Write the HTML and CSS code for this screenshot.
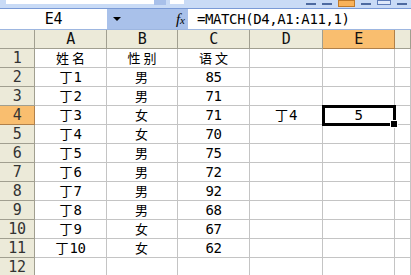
FILE: index.html
```html
<!DOCTYPE html>
<html lang="zh-CN">
<head>
  <meta charset="UTF-8" />
  <title>MATCH</title>
  <link rel="stylesheet" href="styles.css">
</head>
<body>
  <div class="toolbar">
    <div class="tb-box"></div>
    <div class="tb-btn"></div>
    <div class="tb-box short"></div>
    <div class="tb-icons">
      <span class="ico"></span>
      <span class="ico"></span>
      <span class="ico on"></span>
      <span class="ico"></span>
      <span class="ico wide"></span>
      <span class="ico"></span>
    </div>
  </div>

  <div class="formula-bar">
    <div class="name-box">E4</div>
    <div class="name-drop"><span class="arrow"></span></div>
    <div class="fx"><i>f</i><span>x</span></div>
    <div class="formula">=MATCH(D4,A1:A11,1)</div>
  </div>

  <div class="sheet">
    <div class="hd corner"></div>
    <div class="hd">A</div>
    <div class="hd">B</div>
    <div class="hd">C</div>
    <div class="hd">D</div>
    <div class="hd active">E</div>
    <div class="hd"></div>

    <div class="rh">1</div>
    <div class="c"><span class="cn two">姓名</span></div>
    <div class="c"><span class="cn two">性别</span></div>
    <div class="c"><span class="cn two">语文</span></div>
    <div class="c"></div><div class="c"></div><div class="c"></div>

    <div class="rh">2</div>
    <div class="c"><span class="cn">丁</span>1</div>
    <div class="c"><span class="cn">男</span></div>
    <div class="c">85</div>
    <div class="c"></div><div class="c"></div><div class="c"></div>

    <div class="rh">3</div>
    <div class="c"><span class="cn">丁</span>2</div>
    <div class="c"><span class="cn">男</span></div>
    <div class="c">71</div>
    <div class="c"></div><div class="c"></div><div class="c"></div>

    <div class="rh active">4</div>
    <div class="c"><span class="cn">丁</span>3</div>
    <div class="c"><span class="cn">女</span></div>
    <div class="c">71</div>
    <div class="c"><span class="cn">丁</span>4</div>
    <div class="c selected">5</div>
    <div class="c"></div>

    <div class="rh">5</div>
    <div class="c"><span class="cn">丁</span>4</div>
    <div class="c"><span class="cn">女</span></div>
    <div class="c">70</div>
    <div class="c"></div><div class="c"></div><div class="c"></div>

    <div class="rh">6</div>
    <div class="c"><span class="cn">丁</span>5</div>
    <div class="c"><span class="cn">男</span></div>
    <div class="c">75</div>
    <div class="c"></div><div class="c"></div><div class="c"></div>

    <div class="rh">7</div>
    <div class="c"><span class="cn">丁</span>6</div>
    <div class="c"><span class="cn">男</span></div>
    <div class="c">72</div>
    <div class="c"></div><div class="c"></div><div class="c"></div>

    <div class="rh">8</div>
    <div class="c"><span class="cn">丁</span>7</div>
    <div class="c"><span class="cn">男</span></div>
    <div class="c">92</div>
    <div class="c"></div><div class="c"></div><div class="c"></div>

    <div class="rh">9</div>
    <div class="c"><span class="cn">丁</span>8</div>
    <div class="c"><span class="cn">男</span></div>
    <div class="c">68</div>
    <div class="c"></div><div class="c"></div><div class="c"></div>

    <div class="rh">10</div>
    <div class="c"><span class="cn">丁</span>9</div>
    <div class="c"><span class="cn">女</span></div>
    <div class="c">67</div>
    <div class="c"></div><div class="c"></div><div class="c"></div>

    <div class="rh">11</div>
    <div class="c"><span class="cn">丁</span>10</div>
    <div class="c"><span class="cn">女</span></div>
    <div class="c">62</div>
    <div class="c"></div><div class="c"></div><div class="c"></div>

    <div class="rh">12</div>
    <div class="c"></div><div class="c"></div><div class="c"></div>
    <div class="c"></div><div class="c"></div><div class="c"></div>
  </div>
</body>
</html>
```

FILE: styles.css
```css
* {
  box-sizing: border-box;
  margin: 0;
  padding: 0;
}

body {
  width: 411px;
  height: 275px;
  overflow: hidden;
  background: #fff;
  color: #000;
  font-family: "DejaVu Sans Mono", "Noto Sans CJK SC", monospace;
  font-size: 14px;
  letter-spacing: -0.4px;
}

/* CJK glyph box is ~1.45em tall, keep it inside a 19px row */
.cn {
  font-family: "Noto Sans CJK SC", sans-serif;
  font-size: 13px;
  line-height: 16px;
  letter-spacing: 0;
  margin-right: 1px;
}

.cn.two {
  letter-spacing: 3px;
  margin-right: -3px;
}

/* toolbar strip (only its lower edge is visible) */
.toolbar {
  height: 9px;
  display: flex;
  align-items: flex-start;
  background: #c9dbf6;
  border-bottom: 1px solid #7a9ad6;
}

.tb-box {
  width: 148px;
  height: 4px;
  background: #fff;
  margin-left: 6px;
}

.tb-box.short {
  width: 14px;
  margin-left: 4px;
}

.tb-btn {
  width: 12px;
  height: 5px;
  background: #a8c0ea;
}

.tb-icons {
  margin-left: auto;
  display: flex;
  gap: 6px;
  padding-right: 4px;
}

.ico {
  width: 10px;
  height: 5px;
  border-bottom: 2px solid #4d6aa0;
}

.ico.on {
  width: 17px;
  height: 7px;
  background: #f9b25a;
  border: 1px solid #c07a2a;
}

.ico.wide {
  width: 14px;
  border: 1px solid #5e7cb8;
  background: #dfe9fa;
}

/* formula bar */
.formula-bar {
  height: 21px;
  display: flex;
  background: #a9c1ea;
  border-bottom: 1px solid #9db6e0;
}

.name-box {
  width: 107px;
  background: #fff;
  text-align: center;
  line-height: 20px;
  font-size: 15px;
}

.name-drop {
  width: 20px;
  display: flex;
  align-items: center;
  justify-content: center;
}

.arrow {
  border-left: 4px solid transparent;
  border-right: 4px solid transparent;
  border-top: 4px solid #000;
}

.fx {
  width: 61px;
  text-align: right;
  padding-right: 3px;
  line-height: 20px;
  font-family: "Liberation Serif", serif;
  font-size: 15px;
  letter-spacing: 0;
}

.fx span {
  font-size: 11px;
  font-style: italic;
}

.formula {
  flex: 1;
  background: #fff;
  padding-left: 9px;
  line-height: 20px;
}

/* worksheet grid */
.sheet {
  display: grid;
  grid-template-columns: 35px 72px 71px 72px 73px 72px 1fr;
  grid-auto-rows: 19px;
}

.hd,
.rh {
  background: #ecead9;
  border-right: 1px solid #a19f90;
  border-bottom: 1px solid #a19f90;
  text-align: center;
  line-height: 18px;
  color: #111;
  font-size: 15px;
}

.hd.active,
.rh.active {
  background: #f9be6f;
  border-color: #b0804a;
}

.rh {
  color: #333;
}

.c {
  display: flex;
  align-items: center;
  justify-content: center;
  border-right: 1px solid #c4c4c4;
  border-bottom: 1px solid #c4c4c4;
  line-height: 16px;
  white-space: nowrap;
}

.c.selected {
  position: relative;
  z-index: 1;
  outline: 3px solid #000;
  outline-offset: -2px;
}

.c.selected::after {
  content: "";
  position: absolute;
  right: -4px;
  bottom: -4px;
  width: 6px;
  height: 6px;
  background: #000;
  border: 1px solid #fff;
}
```
